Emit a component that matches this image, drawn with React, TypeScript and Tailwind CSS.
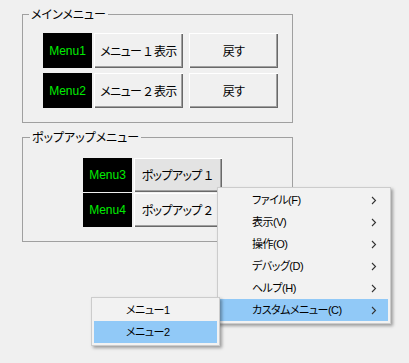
const jp = "font-['Noto_Sans_CJK_JP',sans-serif] [font-feature-settings:'palt']";

const btn =
  "flex items-center justify-center text-[12px] tracking-[-0.6px] text-black shadow-[inset_1px_1px_0_#ffffff,inset_-1px_-1px_0_#696969,inset_-2px_-2px_0_#a0a0a0]";

function Tag({ label, tall }: { label: string; tall?: boolean }) {
  return (
    <div
      className={`flex w-[49px] items-center justify-center bg-black font-['Liberation_Sans',sans-serif] text-[12px] text-[#00ee00] ${
        tall ? "h-[35px]" : "h-[34px]"
      }`}
    >
      {label}
    </div>
  );
}

// the digit keeps a little air on both sides, like the original UI font
function Digit({ children }: { children: string }) {
  return <span className="mx-[2px]">{children}</span>;
}

type Item = { label: string; sub?: boolean; active?: boolean };

const mainItems: Item[] = [
  { label: "ファイル(F)", sub: true },
  { label: "表示(V)", sub: true },
  { label: "操作(O)", sub: true },
  { label: "デバッグ(D)", sub: true },
  { label: "ヘルプ(H)", sub: true },
  { label: "カスタムメニュー(C)", sub: true, active: true },
];

const subItems: Item[] = [{ label: "メニュー1" }, { label: "メニュー2", active: true }];

function Chevron() {
  return (
    <svg width="6" height="9" viewBox="0 0 6 9" className="shrink-0">
      <path d="M1 1l3.5 3.5L1 8" fill="none" stroke="#333" strokeWidth="1.1" />
    </svg>
  );
}

function PopupMenu({ items, className }: { items: Item[]; className: string }) {
  return (
    <div
      className={`absolute border border-[#cccccc] bg-[#f2f2f2] px-[2px] pt-[1px] pb-[2px] font-['Liberation_Sans','Noto_Sans_CJK_JP',sans-serif] [font-feature-settings:'palt'] shadow-[2px_2px_3px_rgba(0,0,0,0.35)] ${className}`}
    >
      {items.map((it) => (
        <div
          key={it.label}
          className={`flex h-[22px] items-center pl-[32px] pr-[11px] text-[11px] tracking-[-0.5px] text-black ${
            it.active ? "bg-[#91c9f7]" : ""
          }`}
        >
          <span className="flex-1">{it.label}</span>
          {it.sub && <Chevron />}
        </div>
      ))}
    </div>
  );
}

export default function App() {
  return (
    <div className={`relative h-[363px] w-[409px] overflow-hidden bg-[#f0f0f0] pt-[7px] pl-[22px] ${jp}`}>
      <fieldset className="w-[271px] border border-[#a0a0a0] pb-[14px]">
        <legend className="ml-[6px] px-[2px] text-[12px] leading-[14px] text-black">メインメニュー</legend>
        <div className="mt-[12px] ml-[20px] flex flex-col gap-[5px]">
          {["１", "２"].map((n, i) => (
            <div key={n} className="flex">
              <Tag label={`Menu${i + 1}`} tall />
              <div className={`ml-[2px] h-[35px] w-[89px] bg-[#f0f0f0] ${btn}`}>
                メニュー<Digit>{n}</Digit>表示
              </div>
              <div className={`ml-[6px] h-[35px] w-[89px] bg-[#f0f0f0] ${btn}`}>戻す</div>
            </div>
          ))}
        </div>
      </fieldset>

      <fieldset className="mt-[7px] w-[271px] border border-[#a0a0a0] pb-[14px]">
        <legend className="ml-[7px] px-[2px] text-[12px] leading-[14px] text-black">ポップアップメニュー</legend>
        <div className="mt-[14px] ml-[60px] flex flex-col gap-[1px]">
          <div className="flex">
            <Tag label="Menu3" />
            <div className={`ml-[2px] h-[34px] w-[88px] bg-[#e3e3e3] ${btn}`}>
              ポップアップ<Digit>１</Digit>
            </div>
          </div>
          <div className="flex">
            <Tag label="Menu4" />
            <div className={`ml-[2px] h-[34px] w-[88px] bg-[#f0f0f0] ${btn}`}>
              ポップアップ<Digit>２</Digit>
            </div>
          </div>
        </div>
      </fieldset>

      <PopupMenu items={mainItems} className="left-[217px] top-[187px] w-[174px]" />
      <PopupMenu items={subItems} className="left-[91px] top-[297px] w-[129px]" />
    </div>
  );
}
